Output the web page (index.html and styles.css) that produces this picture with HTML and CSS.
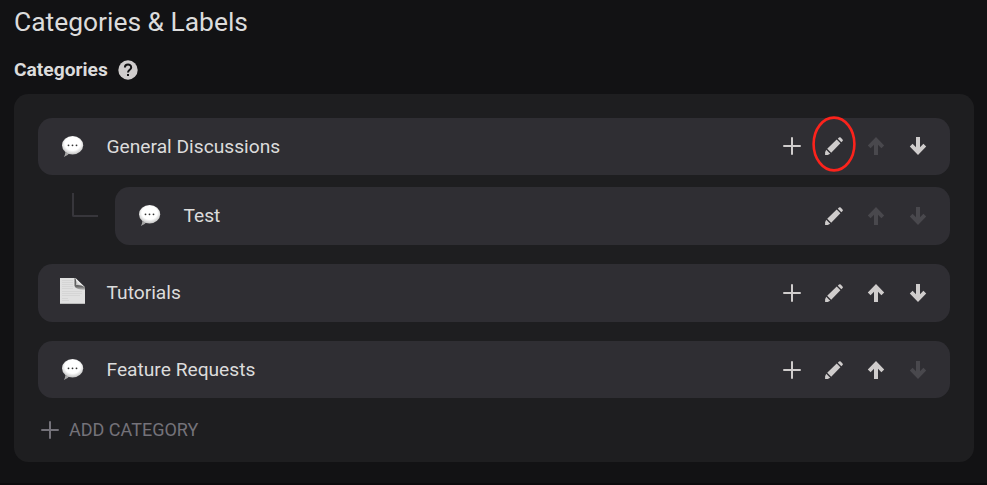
FILE: index.html
```html
<!DOCTYPE html>
<html lang="en">
<head>
    <meta charset="UTF-8">
    <meta name="viewport" content="width=device-width, initial-scale=1.0">
    <title>Categories &amp; Labels</title>
    <link rel="stylesheet" href="styles.css">
</head>
<body>
    <!-- shared icons -->
    <svg class="sprite" aria-hidden="true">
        <defs>
            <radialGradient id="bubbleFill" cx="50%" cy="42%" r="60%">
                <stop offset="0.6" stop-color="#fff"/>
                <stop offset="1" stop-color="#bdbdbd"/>
            </radialGradient>
            <linearGradient id="foldFill" x1="1" y1="0" x2="0" y2="1">
                <stop offset="0.45" stop-color="#fff"/>
                <stop offset="1" stop-color="#999"/>
            </linearGradient>
            <linearGradient id="foldShade" x1="0" y1="0" x2="0" y2="1">
                <stop offset="0" stop-color="#555"/>
                <stop offset="0.7" stop-color="#666"/>
                <stop offset="1" stop-color="#bbb"/>
            </linearGradient>
        </defs>
        <symbol id="plus" viewBox="0 0 18 18">
            <path d="M9 1v16M1 9h16" fill="none" stroke="currentColor" stroke-width="2" stroke-linecap="round"/>
        </symbol>
        <symbol id="pencil" viewBox="0 0 18 18">
            <path d="M0.1 17.9V15.3L1.2 12.8L5.2 16.8L2.7 17.9ZM2.2 11.8L11.7 2.6L15.4 6.3L6.2 15.8ZM12.8 1.8L14 0.6Q14.8 0 15.7 0.6L17.5 2.4Q18.3 3.3 17.6 4L16.3 5.3Z" fill="currentColor"/>
        </symbol>
        <symbol id="up" viewBox="0 0 18 18">
            <path d="M9 0.1L17.2 8.4L14.4 11.2L11 7.8V18H7V7.8L3.6 11.2L0.8 8.4Z" fill="currentColor"/>
        </symbol>
        <symbol id="down" viewBox="0 0 18 18">
            <path d="M9 17.9L17.2 9.6L14.4 6.8L11 10.2V0H7V10.2L3.6 6.8L0.8 9.6Z" fill="currentColor"/>
        </symbol>
        <symbol id="bubble" viewBox="0 0 26 26">
            <path d="M5.4 18Q5.2 20.8 3.8 23Q8 21.6 9.6 19Z" fill="#a5a5a5"/>
            <ellipse cx="12.6" cy="11.2" rx="10.6" ry="9.2" fill="url(#bubbleFill)"/>
            <circle cx="8.5" cy="11.3" r="0.9" fill="#333"/>
            <circle cx="12.5" cy="11.3" r="0.9" fill="#333"/>
            <circle cx="16.5" cy="11.3" r="0.9" fill="#333"/>
        </symbol>
        <symbol id="page" viewBox="0 0 26 26">
            <path d="M0 0H15L25 10V26H0Z" fill="#e0e0e0"/>
            <path d="M2 2.5H13M2 4.5H13M2 6.5H13M2 8.5H13M2 10.5H13M2 13.5H22M2 15.5H22M2 17.5H20M2 20.5H8M2 22.5H9" stroke="#d2d2d2" stroke-width="0.8"/>
            <path d="M14.5 0V8Q16 12 25 11.8V9Z" fill="url(#foldShade)"/>
            <path d="M15.5 0L25 9.3Q21 6.4 16 7Q16.8 4 15.5 0Z" fill="url(#foldFill)"/>
            <path d="M0 25.5H25" stroke="#bbb"/>
        </symbol>
    </svg>

    <h1>Categories &amp; Labels</h1>

    <div class="section-title">
        <h2>Categories</h2>
        <svg class="help" viewBox="0 0 20 20">
            <circle cx="10" cy="10" r="9.7" fill="currentColor"/>
            <path d="M6.9 7.6C6.9 3.5 13.2 3.6 13.2 7.4C13.2 9.6 10 9.8 10 12.4" fill="none" stroke="#121214" stroke-width="2"/>
            <rect x="9" y="14" width="2" height="2" fill="#121214"/>
        </svg>
    </div>

    <div class="panel">
        <div class="group">
            <div class="row">
                <svg class="emoji"><use href="#bubble"/></svg>
                <span class="name">General Discussions</span>
                <div class="actions">
                    <svg class="icon"><use href="#plus"/></svg>
                    <span class="marked">
                        <svg class="icon"><use href="#pencil"/></svg>
                        <svg class="ring" viewBox="0 0 44 56"><ellipse cx="22" cy="28" rx="20.4" ry="26.4"/></svg>
                    </span>
                    <svg class="icon disabled"><use href="#up"/></svg>
                    <svg class="icon"><use href="#down"/></svg>
                </div>
            </div>
            <div class="child">
                <span class="branch"></span>
                <div class="row">
                    <svg class="emoji"><use href="#bubble"/></svg>
                    <span class="name">Test</span>
                    <div class="actions">
                        <svg class="icon"><use href="#pencil"/></svg>
                        <svg class="icon disabled"><use href="#up"/></svg>
                        <svg class="icon disabled"><use href="#down"/></svg>
                    </div>
                </div>
            </div>
        </div>

        <div class="group">
            <div class="row">
                <svg class="emoji page"><use href="#page"/></svg>
                <span class="name">Tutorials</span>
                <div class="actions">
                    <svg class="icon"><use href="#plus"/></svg>
                    <svg class="icon"><use href="#pencil"/></svg>
                    <svg class="icon"><use href="#up"/></svg>
                    <svg class="icon"><use href="#down"/></svg>
                </div>
            </div>
        </div>

        <div class="group">
            <div class="row">
                <svg class="emoji"><use href="#bubble"/></svg>
                <span class="name">Feature Requests</span>
                <div class="actions">
                    <svg class="icon"><use href="#plus"/></svg>
                    <svg class="icon"><use href="#pencil"/></svg>
                    <svg class="icon"><use href="#up"/></svg>
                    <svg class="icon disabled"><use href="#down"/></svg>
                </div>
            </div>
        </div>

        <div class="add">
            <svg class="icon"><use href="#plus"/></svg>
            <span>ADD CATEGORY</span>
        </div>
    </div>
</body>
</html>
```
FILE: styles.css
```css
* {
    box-sizing: border-box;
}

body {
    margin: 0;
    height: 485px;
    padding: 6px 13px 0 14px;
    background: #121214;
    border-bottom: 2px solid #0c0b0d;
    color: #dcdcdc;
    font-family: Roboto, "Liberation Sans", sans-serif;
    font-size: 19.2px;
    overflow: hidden;
}

.sprite {
    position: absolute;
    width: 0;
    height: 0;
}

h1 {
    margin: 0;
    font-size: 26.4px;
    font-weight: 400;
    line-height: 32px;
}

.section-title {
    display: flex;
    align-items: center;
    gap: 10px;
    height: 24px;
    margin: 20px 0 11.6px;
}

h2 {
    margin: 0;
    font-size: 19.2px;
    font-weight: 700;
    line-height: 24px;
}

.help {
    width: 20px;
    height: 20px;
    margin-bottom: 1px;
    color: #cfcccc;
}

.panel {
    height: 368px;
    padding: 24px;
    background: #1e1e20;
    border-radius: 14.4px;
}

.group {
    margin-bottom: 19.35px;
}

.row {
    display: flex;
    align-items: center;
    flex: 1;
    height: 57.5px;
    padding: 0 23px 0 22px;
    background: #2f2e33;
    border-radius: 14.4px;
}

.emoji {
    width: 26px;
    height: 26px;
    margin-top: 1px;
    margin-right: 20.5px;
}

.emoji.page {
    margin-top: -4px;
}

.name {
    flex: 1;
    padding-top: 0.5px;
    line-height: 24px;
}

.actions {
    display: flex;
    gap: 24px;
    color: #cfcccc;
}

.icon {
    display: block;
    width: 18px;
    height: 18px;
}

.disabled {
    color: #49484d;
}

/* red ring over the edit button */
.marked {
    position: relative;
}

.ring {
    position: absolute;
    top: -21px;
    left: -13px;
    width: 44px;
    height: 56px;
    fill: none;
    stroke: #fb231c;
    stroke-width: 2.6;
}

.child {
    display: flex;
    margin-top: 12.1px;
}

.branch {
    width: 26px;
    height: 24px;
    margin: 6px 17px 0 34px;
    border-left: 2px solid #37363b;
    border-bottom: 2px solid #37363b;
    border-bottom-left-radius: 2px;
}

.add {
    display: flex;
    align-items: center;
    gap: 10px;
    height: 24px;
    padding-left: 3px;
    color: #747279;
    font-size: 18px;
}
```
